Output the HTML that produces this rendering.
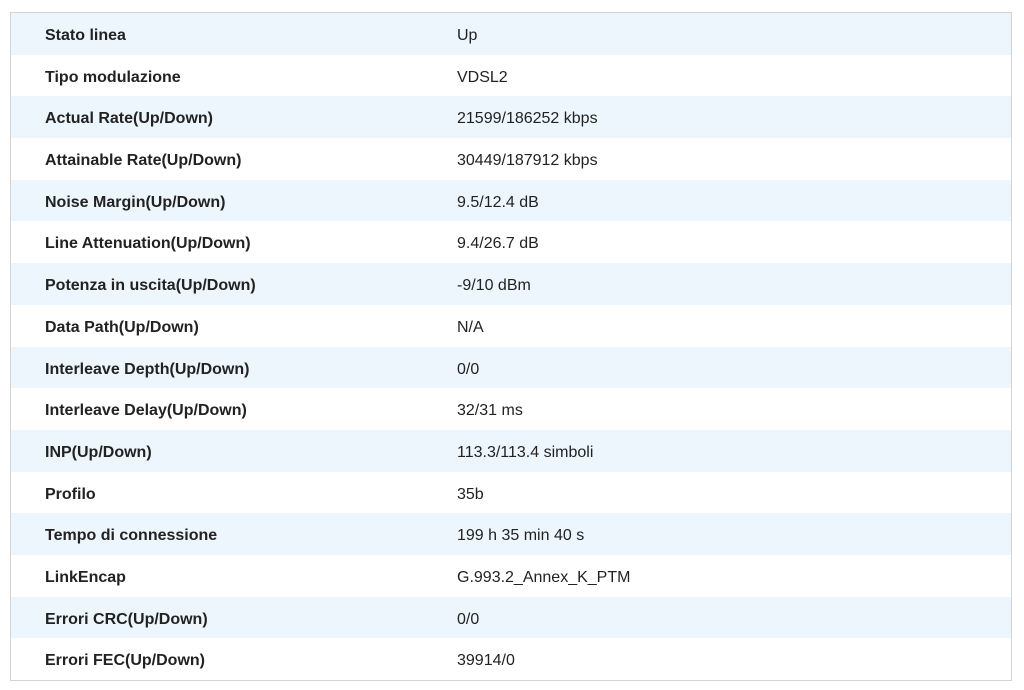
<!DOCTYPE html>
<html><head><style>
body{margin:0;background:#fff;font-family:"Liberation Sans",Arial,sans-serif;}
.box{position:absolute;left:10px;top:12px;width:1000px;height:667px;border:1px solid #d4d4d4;}
.r{height:41.69px;position:relative;font-size:16px;color:#222;}
.r:nth-child(odd){background:#eef6fd;}
.l{position:absolute;left:34px;top:14px;font-weight:bold;}
.v{position:absolute;left:446px;top:14px;}
</style></head><body><div class="box">
<div class="r"><span class="l">Stato linea</span><span class="v">Up</span></div>
<div class="r"><span class="l">Tipo modulazione</span><span class="v">VDSL2</span></div>
<div class="r"><span class="l">Actual Rate(Up/Down)</span><span class="v">21599/186252 kbps</span></div>
<div class="r"><span class="l">Attainable Rate(Up/Down)</span><span class="v">30449/187912 kbps</span></div>
<div class="r"><span class="l">Noise Margin(Up/Down)</span><span class="v">9.5/12.4 dB</span></div>
<div class="r"><span class="l">Line Attenuation(Up/Down)</span><span class="v">9.4/26.7 dB</span></div>
<div class="r"><span class="l">Potenza in uscita(Up/Down)</span><span class="v">-9/10 dBm</span></div>
<div class="r"><span class="l">Data Path(Up/Down)</span><span class="v">N/A</span></div>
<div class="r"><span class="l">Interleave Depth(Up/Down)</span><span class="v">0/0</span></div>
<div class="r"><span class="l">Interleave Delay(Up/Down)</span><span class="v">32/31 ms</span></div>
<div class="r"><span class="l">INP(Up/Down)</span><span class="v">113.3/113.4 simboli</span></div>
<div class="r"><span class="l">Profilo</span><span class="v">35b</span></div>
<div class="r"><span class="l">Tempo di connessione</span><span class="v">199 h 35 min 40 s</span></div>
<div class="r"><span class="l">LinkEncap</span><span class="v">G.993.2_Annex_K_PTM</span></div>
<div class="r"><span class="l">Errori CRC(Up/Down)</span><span class="v">0/0</span></div>
<div class="r"><span class="l">Errori FEC(Up/Down)</span><span class="v">39914/0</span></div>
</div></body></html>
